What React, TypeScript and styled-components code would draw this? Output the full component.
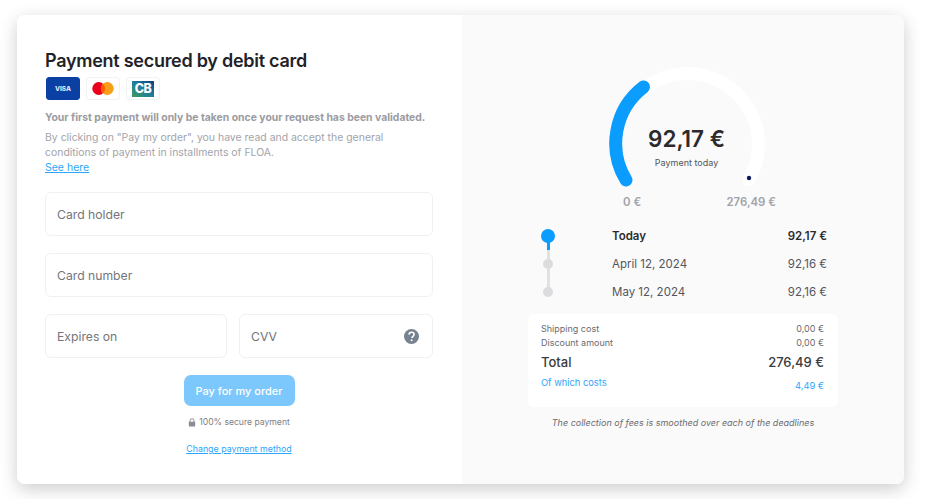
import * as React from 'react';
import styled, { createGlobalStyle } from 'styled-components';

const GlobalStyle = createGlobalStyle`
    html, body {
        margin: 0;
        padding: 0;
        background: #fff;
    }
    body {
        font-family: Inter, 'Open Sans', sans-serif;
    }
`;

const Page = styled.div`
    width: 928px;
    height: 499px;
    padding: 15px 24px 15px 17px;
    box-sizing: border-box;
    overflow: hidden;
`;

const Card = styled.div`
    display: flex;
    width: 887px;
    height: 469px;
    border-radius: 8px;
    overflow: hidden;
    box-shadow: 0 5px 18px rgba(0, 0, 0, 0.2);
`;

/** left panel */
const FormPanel = styled.div`
    display: flex;
    flex-direction: column;
    width: 445px;
    padding: 35px 29px 0 28px;
    box-sizing: border-box;
    background: #fff;
`;

const Title = styled.h1`
    margin: 0;
    font-size: 18px;
    line-height: 22px;
    font-weight: 600;
    letter-spacing: -0.27px;
    color: #1f2329;
`;

const Brands = styled.div`
    display: flex;
    gap: 6px;
    margin-top: 5px;
    padding-left: 1px;
`;

const Brand = styled.div<{ $bg?: string }>`
    display: flex;
    align-items: center;
    justify-content: center;
    width: 34px;
    height: 23px;
    box-sizing: border-box;
    border-radius: 3px;
    border: 1px solid ${(p) => p.$bg ?? '#f2f2f2'};
    background: ${(p) => p.$bg ?? '#fff'};
`;

const Lead = styled.p`
    margin: 10px 0 0;
    font-size: 10.4px;
    line-height: 15px;
    font-weight: 700;
    color: #9b9ca3;
`;

const Legal = styled.p`
    margin: 5px 0 0;
    font-size: 10.45px;
    line-height: 15px;
    color: #a3a4aa;
`;

const BlueLink = styled.a<{ $size: number }>`
    display: block;
    font-size: ${(p) => p.$size}px;
    color: #2ea6fb;
    text-decoration: underline;
`;

const Fields = styled.div`
    display: flex;
    flex-direction: column;
    gap: 17px;
    margin-top: 17px;
`;

const Field = styled.div<{ $width?: number }>`
    display: flex;
    align-items: center;
    justify-content: space-between;
    width: ${(p) => (p.$width ? `${p.$width}px` : 'auto')};
    height: 44px;
    padding: 0 13px 0 11px;
    box-sizing: border-box;
    border: 1px solid #f0f0f1;
    border-radius: 6px;
    font-size: 12.2px;
    color: #74757b;
`;

const FieldRow = styled.div`
    display: flex;
    gap: 12px;
`;

const PayButton = styled.button`
    align-self: center;
    width: 111px;
    height: 31px;
    margin-top: 17px;
    padding: 0;
    border: 0;
    border-radius: 7px;
    background: #7cc7fc;
    color: #fff;
    font-family: inherit;
    font-size: 11px;
    font-weight: 500;
`;

const Secure = styled.div`
    display: flex;
    align-items: center;
    justify-content: center;
    gap: 3px;
    margin-top: 9px;
    font-size: 8.6px;
    line-height: 14px;
    color: #7d7e85;
`;

const ChangeMethod = styled.div`
    margin-top: 14px;
    text-align: center;
`;

/** right panel */
const SummaryPanel = styled.div`
    display: flex;
    flex: 1;
    flex-direction: column;
    align-items: center;
    padding-top: 50px;
    background: #fafafa;
`;

const Gauge = styled.div`
    position: relative;
    width: 156px;
    height: 124px;
    margin-left: 7px;
    svg {
        display: block;
    }
`;

const GaugeLabel = styled.div`
    position: absolute;
    top: 60px;
    left: 0;
    right: 0;
    text-align: center;
`;

const GaugeAmount = styled.div`
    font-size: 22.5px;
    line-height: 28px;
    font-weight: 600;
    color: #2b2b2e;
`;

const GaugeCaption = styled.div`
    margin-top: 3px;
    font-size: 9px;
    line-height: 14px;
    color: #55565c;
`;

const Bounds = styled.div`
    display: flex;
    justify-content: space-between;
    width: 153px;
    margin: 5px 0 0 33px;
    font-size: 11.4px;
    line-height: 16px;
    font-weight: 600;
    color: #a2a3a9;
`;

const Schedule = styled.div`
    position: relative;
    display: flex;
    flex-direction: column;
    gap: 6px;
    width: 286px;
    margin-top: 15px;
    margin-left: 2px;
`;

const Rail = styled.div`
    position: absolute;
    top: 11px;
    left: 0;
    width: 14px;
    height: 56px;
    display: flex;
    justify-content: center;
`;

const RailLine = styled.div`
    width: 3px;
    height: 100%;
    background: linear-gradient(#0a9dfd 0 25%, #e1e1e3 25%);
`;

const Dot = styled.span<{ $active?: boolean }>`
    flex: none;
    position: relative;
    width: ${(p) => (p.$active ? 14 : 10)}px;
    height: ${(p) => (p.$active ? 14 : 10)}px;
    margin: 0 ${(p) => (p.$active ? 0 : 2)}px;
    border-radius: 50%;
    background: ${(p) => (p.$active ? '#0a9dfd' : '#dcdcde')};
`;

const ScheduleRow = styled.div<{ $active?: boolean }>`
    display: flex;
    align-items: center;
    height: 22px;
    font-size: 11.5px;
    font-weight: ${(p) => (p.$active ? 600 : 400)};
    color: ${(p) => (p.$active ? '#2b2b2e' : '#55565c')};
`;

const RowDate = styled.span`
    flex: 1;
    margin-left: 57px;
`;

const Totals = styled.div`
    display: flex;
    flex-direction: column;
    width: 310px;
    height: 93px;
    margin-top: 11px;
    padding: 7px 14px 0 13px;
    box-sizing: border-box;
    border-radius: 6px;
    background: #fff;
`;

const TotalRow = styled.div<{ $big?: boolean; $blue?: boolean }>`
    display: flex;
    align-items: ${(p) => (p.$blue ? 'flex-start' : 'center')};
    justify-content: space-between;
    height: ${(p) => (p.$big ? 26 : p.$blue ? 24 : 14)}px;
    font-size: ${(p) => (p.$big ? 13 : p.$blue ? 9.3 : 9)}px;
    font-weight: ${(p) => (p.$big ? 500 : 400)};
    color: ${(p) => (p.$big ? '#3a3b40' : p.$blue ? '#2ea6fb' : '#6a6b71')};
`;

const CostLabel = styled.span`
    padding-top: 2px;
`;

const CostValue = styled.span`
    padding-top: 5px;
`;

const Note = styled.p`
    margin: 9px 0 0;
    font-size: 9px;
    line-height: 14px;
    font-style: italic;
    color: #6a6b71;
`;

function VisaMark() {
    return (
        <svg width="20" height="10" viewBox="0 0 20 10">
            <text x="10" y="7.4" textAnchor="middle" fontSize="6.5" fontWeight="800" fill="#dfe6f5" fontFamily="Inter">
                VISA
            </text>
        </svg>
    );
}

function MastercardMark() {
    return (
        <svg width="24" height="15" viewBox="0 0 24 15">
            <circle cx="7.7" cy="7.5" r="6.4" fill="#eb001b" />
            <circle cx="16.3" cy="7.5" r="6.4" fill="#f79e1b" />
            <path d="M12 2.7a6.4 6.4 0 0 1 0 9.6a6.4 6.4 0 0 1 0-9.6z" fill="#ff5f00" />
        </svg>
    );
}

function CbMark() {
    return (
        <svg width="22" height="16" viewBox="0 0 22 16">
            <defs>
                <linearGradient id="cb-bg" x1="0" y1="1" x2="1" y2="0">
                    <stop offset="0" stopColor="#3f9a5a" />
                    <stop offset="0.5" stopColor="#1f7f9c" />
                    <stop offset="1" stopColor="#123a7e" />
                </linearGradient>
            </defs>
            <rect width="22" height="16" fill="url(#cb-bg)" />
            <text x="11" y="12.2" textAnchor="middle" fontSize="12.5" fontWeight="800" letterSpacing="-0.5" fill="#fff" fontFamily="Inter">
                CB
            </text>
        </svg>
    );
}

function HelpIcon() {
    return (
        <svg width="15" height="15" viewBox="0 0 15 15">
            <circle cx="7.5" cy="7.5" r="7.5" fill="#77828f" />
            <path d="M5 5.6c.1-1.5 1.2-2.3 2.6-2.3 1.5 0 2.5.9 2.5 2.1 0 1-.6 1.5-1.2 2-.6.4-.9.7-.9 1.5" fill="none" stroke="#fff" strokeWidth="1.6" />
            <circle cx="7.6" cy="11.2" r="1" fill="#fff" />
        </svg>
    );
}

function LockIcon() {
    return (
        <svg width="8" height="9" viewBox="0 0 8 9">
            <path d="M2 4V2.7a2 2 0 0 1 4 0V4" fill="none" stroke="#8b8c93" strokeWidth="1" />
            <rect x="0.8" y="3.8" width="6.4" height="4.7" rx="0.7" fill="#8b8c93" />
        </svg>
    );
}

// centre 78,78 radius 71, open at the bottom
function GaugeDial() {
    return (
        <svg width="156" height="124" viewBox="0 0 156 124">
            <path d="M 17 115 A 71 71 0 1 1 140 115" fill="none" stroke="#fff" strokeWidth="13" strokeLinecap="round" />
            <path d="M 17 115 A 71 71 0 0 1 34.5 22" fill="none" stroke="#0a9dfd" strokeWidth="13" strokeLinecap="round" />
            <circle cx="140" cy="113" r="2.2" fill="#0c1a5c" />
        </svg>
    );
}

const rows = [
    { date: 'Today', amount: '92,17 €', active: true },
    { date: 'April 12, 2024', amount: '92,16 €' },
    { date: 'May 12, 2024', amount: '92,16 €' },
];

export default function App() {
    return (
        <Page>
            <GlobalStyle />
            <Card>
                <FormPanel>
                    <Title>Payment secured by debit card</Title>
                    <Brands>
                        <Brand $bg="#0a3fa3">
                            <VisaMark />
                        </Brand>
                        <Brand>
                            <MastercardMark />
                        </Brand>
                        <Brand>
                            <CbMark />
                        </Brand>
                    </Brands>
                    <Lead>Your first payment will only be taken once your request has been validated.</Lead>
                    <Legal>
                        By clicking on "Pay my order", you have read and accept the general
                        <br />
                        conditions of payment in installments of FLOA.
                        <BlueLink $size={10.5}>See here</BlueLink>
                    </Legal>
                    <Fields>
                        <Field>Card holder</Field>
                        <Field>Card number</Field>
                        <FieldRow>
                            <Field $width={182}>Expires on</Field>
                            <Field $width={194}>
                                CVV
                                <HelpIcon />
                            </Field>
                        </FieldRow>
                    </Fields>
                    <PayButton>Pay for my order</PayButton>
                    <Secure>
                        <LockIcon />
                        100% secure payment
                    </Secure>
                    <ChangeMethod>
                        <BlueLink $size={8.85}>Change payment method</BlueLink>
                    </ChangeMethod>
                </FormPanel>
                <SummaryPanel>
                    <Gauge>
                        <GaugeDial />
                        <GaugeLabel>
                            <GaugeAmount>92,17 €</GaugeAmount>
                            <GaugeCaption>Payment today</GaugeCaption>
                        </GaugeLabel>
                    </Gauge>
                    <Bounds>
                        <span>0 €</span>
                        <span>276,49 €</span>
                    </Bounds>
                    <Schedule>
                        <Rail>
                            <RailLine />
                        </Rail>
                        {rows.map((row) => (
                            <ScheduleRow key={row.date} $active={row.active}>
                                <Dot $active={row.active} />
                                <RowDate>{row.date}</RowDate>
                                <span>{row.amount}</span>
                            </ScheduleRow>
                        ))}
                    </Schedule>
                    <Totals>
                        <TotalRow>
                            <span>Shipping cost</span>
                            <span>0,00 €</span>
                        </TotalRow>
                        <TotalRow>
                            <span>Discount amount</span>
                            <span>0,00 €</span>
                        </TotalRow>
                        <TotalRow $big>
                            <span>Total</span>
                            <span>276,49 €</span>
                        </TotalRow>
                        <TotalRow $blue>
                            <CostLabel>Of which costs</CostLabel>
                            <CostValue>4,49 €</CostValue>
                        </TotalRow>
                    </Totals>
                    <Note>The collection of fees is smoothed over each of the deadlines</Note>
                </SummaryPanel>
            </Card>
        </Page>
    );
}
